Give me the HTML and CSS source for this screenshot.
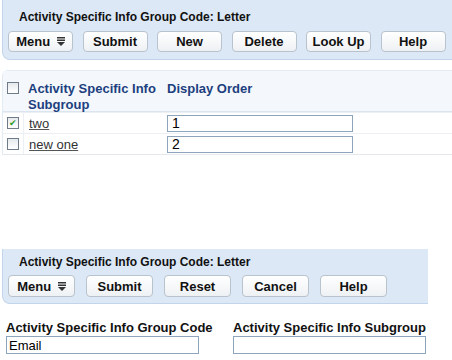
FILE: index.html
```html
<!DOCTYPE html>
<html lang="en">

<head>
    <meta charset="UTF-8">
    <title>Activity Specific Info Group</title>
    <link rel="stylesheet" href="styles.css">
</head>

<body>
    <div class="panel panel-top">
        <div class="panel-title">Activity Specific Info Group Code: Letter</div>
        <div class="toolbar">
            <button class="btn btn-menu">Menu <svg class="menu-icon" width="8" height="9" viewBox="0 0 8 9"><rect x="0" y="0" width="8" height="1.5" fill="#333"/><rect x="0" y="2.5" width="8" height="1.5" fill="#333"/><polygon points="0,5 8,5 4,9" fill="#333"/></svg></button>
            <button class="btn">Submit</button>
            <button class="btn">New</button>
            <button class="btn">Delete</button>
            <button class="btn">Look Up</button>
            <button class="btn">Help</button>
        </div>
    </div>

    <div class="grid">
        <div class="grid-row grid-head">
            <div class="cell-check"><span class="box"></span></div>
            <div class="cell-name">Activity Specific Info<br>Subgroup</div>
            <div class="cell-order">Display Order</div>
        </div>
        <div class="grid-row">
            <div class="cell-check"><span class="box checked">&#10004;</span></div>
            <div class="cell-name"><a href="#">two</a></div>
            <div class="cell-order"><input type="text" value="1"></div>
        </div>
        <div class="grid-row">
            <div class="cell-check"><span class="box"></span></div>
            <div class="cell-name"><a href="#">new one</a></div>
            <div class="cell-order"><input type="text" value="2"></div>
        </div>
    </div>

    <div class="panel panel-bottom">
        <div class="panel-title">Activity Specific Info Group Code: Letter</div>
        <div class="toolbar">
            <button class="btn btn-menu">Menu <svg class="menu-icon" width="8" height="9" viewBox="0 0 8 9"><rect x="0" y="0" width="8" height="1.5" fill="#333"/><rect x="0" y="2.5" width="8" height="1.5" fill="#333"/><polygon points="0,5 8,5 4,9" fill="#333"/></svg></button>
            <button class="btn">Submit</button>
            <button class="btn">Reset</button>
            <button class="btn">Cancel</button>
            <button class="btn">Help</button>
        </div>
    </div>

    <div class="fields">
        <div class="field">
            <label>Activity Specific Info Group Code</label>
            <input type="text" value="Email">
        </div>
        <div class="field">
            <label>Activity Specific Info Subgroup</label>
            <input type="text" value="">
        </div>
    </div>
</body>

</html>
```

FILE: styles.css
```css
body {
    font-family: 'Liberation Sans', Arial, sans-serif;
    font-size: 12px;
    margin: 0;
    padding: 0;
    width: 452px;
    background: white;
    color: #000;
}

.panel {
    background-color: #dce8f5;
    border: 1px solid #c3d5ea;
    border-right: none;
    border-radius: 8px 0 0 8px;
    margin-left: 2px;
    box-sizing: border-box;
}

.panel-top {
    height: 60px;
    padding: 8px 0 0 0;
    border-top: none;
    border-top-left-radius: 0;
}

.panel-bottom {
    width: 426px;
    height: 55px;
    margin-top: 94px;
    padding: 3px 0 0 0;
    border-top: none;
    border-radius: 0 0 0 8px;
}

.panel-title {
    font-weight: bold;
    font-size: 12px;
    color: #111;
    padding-left: 16px;
    height: 20px;
    line-height: 20px;
}

.panel-top .panel-title {
    line-height: 18px;
}

.toolbar {
    display: flex;
    gap: 10px;
    padding-left: 5px;
    margin-top: 3px;
}

.btn {
    font-family: 'Liberation Sans', Arial, sans-serif;
    font-weight: bold;
    font-size: 13px;
    color: #111;
    height: 21px;
    width: 65px;
    padding: 0;
    background: linear-gradient(#ffffff, #eef1f4);
    border: 1px solid #b9c3cd;
    border-radius: 4px;
}

.panel-top .btn + .btn {
    margin-left: -0.5px;
}

.panel-bottom .btn {
    width: 67px;
    height: 22px;
}

.panel-bottom .btn + .btn {
    margin-left: 1px;
}

.menu-icon {
    margin-left: 3px;
    vertical-align: 0;
}

.grid {
    margin: 10px 0 0 2px;
    border-top: 1px solid #e3ebf3;
    border-left: 1px solid #e3ebf3;
    border-radius: 6px 0 0 0;
    border-bottom: 1px solid #e5e9ee;
}

.grid-row {
    display: flex;
    height: 20px;
    align-items: center;
    border-top: 1px solid #eceff3;
}

.grid-head {
    height: 41px;
    background-color: #f4f8fc;
    border-top: none;
    border-bottom: 1px solid #dbe5ef;
    align-items: flex-start;
    padding-top: 3px;
    box-sizing: border-box;
    font-weight: bold;
    font-size: 13px;
    color: #1d3f7e;
    line-height: 16px;
}

.cell-check {
    width: 20px;
    height: 100%;
    display: flex;
    align-items: center;
    justify-content: center;
    border-right: 1px solid #eceff3;
}

.grid-head .cell-check {
    border-right: none;
    height: auto;
    padding-top: 8px;
}

.box {
    display: inline-block;
    width: 10px;
    height: 10px;
    border: 1px solid #6f7b88;
    background: linear-gradient(#e6e9ec, #ffffff);
    font-size: 9px;
    line-height: 10px;
    text-align: center;
    color: #2f9d2f;
}

.cell-name {
    width: 138px;
    padding-left: 5px;
    font-size: 13px;
}

.grid-head .cell-name {
    padding-top: 7px;
}

.grid-head .cell-order {
    padding-top: 7px;
    padding-left: 1px;
}

.cell-name a {
    color: #333;
    text-decoration: underline;
    text-decoration-color: #555;
    padding-right: 3px;
}

.cell-order input {
    width: 186px;
    height: 17px;
    box-sizing: border-box;
    border: 1px solid #8ea4ba;
    font-family: 'Liberation Sans', Arial, sans-serif;
    font-size: 14px;
    padding: 0 4px;
    margin: 0;
}

.fields {
    display: flex;
    gap: 34px;
    padding-left: 6px;
    margin-top: 16px;
}

.field {
    width: 193px;
    display: flex;
    flex-direction: column;
}

.field label {
    font-weight: bold;
    font-size: 13px;
    color: #111;
    line-height: 16px;
    white-space: nowrap;
}

.field input {
    width: 193px;
    height: 18px;
    box-sizing: border-box;
    border: 1px solid #8ea4ba;
    font-family: 'Liberation Sans', Arial, sans-serif;
    font-size: 13px;
    padding: 0 2px;
    margin: 0;
}
```
